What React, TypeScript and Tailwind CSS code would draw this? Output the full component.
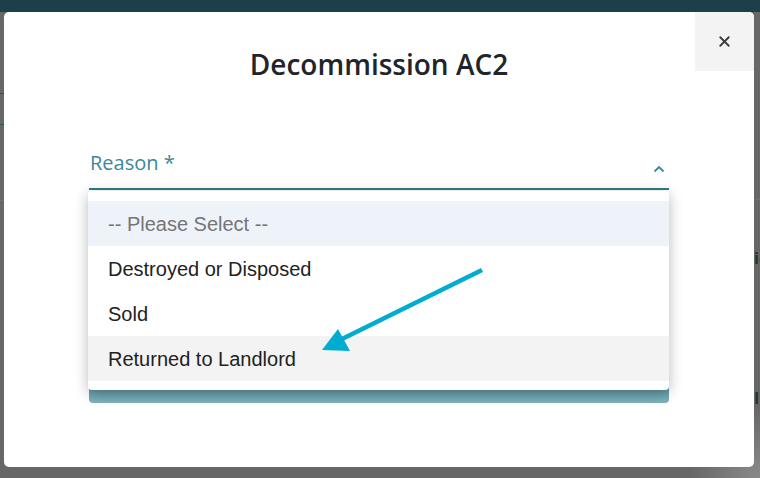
import { X } from "lucide-react"

const options = ["-- Please Select --", "Destroyed or Disposed", "Sold", "Returned to Landlord"]

function Backdrop() {
  // the page that sits under the dark overlay
  return (
    <div className="flex flex-col h-full">
      <div className="h-[12px] bg-[#1d3f4a]" />
      <div className="flex justify-between flex-1">
        <div className="w-[4px] flex flex-col">
          <div className="mt-[81px] h-px bg-[#2c5560]" />
          <div className="mt-[30px] h-px bg-[#2c5560]" />
          <div className="mt-[75px] h-px bg-[#707070]" />
        </div>
        <div className="w-[6px] flex flex-col overflow-hidden font-['Open_Sans',sans-serif] text-[16px] font-bold text-[#23343a]">
          <div className="mt-[187px] h-px bg-[#707070]" />
          <div className="mt-[48px] leading-[20px] whitespace-nowrap">id</div>
          <div className="mt-[120px] leading-[20px] whitespace-nowrap">In</div>
        </div>
      </div>
    </div>
  )
}

export default function App() {
  return (
    <div className="relative w-[760px] h-[478px] overflow-hidden bg-[radial-gradient(circle_at_100%_100%,#8a8a8a_0,#676767_70px)]">
      <Backdrop />

      {/* modal window over the page */}
      <div className="absolute left-[4px] top-[12px] w-[750px] h-[455px] bg-white rounded-[5px] overflow-hidden">
        <button className="absolute right-0 top-0 w-[59px] h-[59px] bg-[#f3f3f3] flex items-center justify-center">
          <X className="w-[17px] h-[17px] text-[#3c3c3c]" strokeWidth={2.6} />
        </button>

        <h2 className="pt-[33px] text-center text-[28px] leading-[38px] font-semibold text-[#212529] font-['Open_Sans',sans-serif]">
          Decommission AC2
        </h2>

        <div className="relative mx-[85px] mt-[66px]">
          <div className="flex items-center justify-between border-b-2 border-[#2f7d8b] pb-[11px]">
            <span className="pl-px text-[20px] leading-[28px] text-[#3a8898] font-['Open_Sans',sans-serif]">
              Reason *
            </span>
            <svg width="12" height="8" viewBox="0 0 12 8" className="mr-[4px] mt-[12px]">
              <path d="M1.5 6.5 L6 2 L10.5 6.5" fill="none" stroke="#3a8898" strokeWidth="1.8" />
            </svg>
          </div>

          {/* next field, mostly hidden by the open list */}
          <div className="mt-[191px] h-[22px] rounded-b-[4px] bg-gradient-to-b from-[#4c8794] to-[#80b4bd]" />
          <div className="absolute right-0 top-[48px] w-[2px] h-[23px] bg-[#2f7d8b]" />

          {/* open list */}
          <div className="absolute left-[-1px] right-0 top-[42px] bg-white rounded-[4px] pt-[10px] pb-[9px] shadow-[0_3px_14px_rgba(0,0,0,0.28)] font-['Liberation_Sans',Arial,sans-serif]">
            {options.map((o, i) => (
              <div
                key={o}
                className={`h-[45px] flex items-center pl-[20px] text-[20px] ${
                  i === 0 ? "bg-[#eef3fa] text-[#757575]" : i === 3 ? "bg-[#f3f3f3] text-[#222]" : "text-[#222]"
                }`}
              >
                {o}
              </div>
            ))}
          </div>
        </div>
      </div>

      {/* annotation arrow */}
      <svg className="absolute left-0 top-0" width="760" height="478" viewBox="0 0 760 478">
        <line x1="482" y1="270" x2="340" y2="340" stroke="#00acd0" strokeWidth="4.5" />
        <polygon points="322,350 338,329 350,351" fill="#00acd0" />
      </svg>
    </div>
  )
}
